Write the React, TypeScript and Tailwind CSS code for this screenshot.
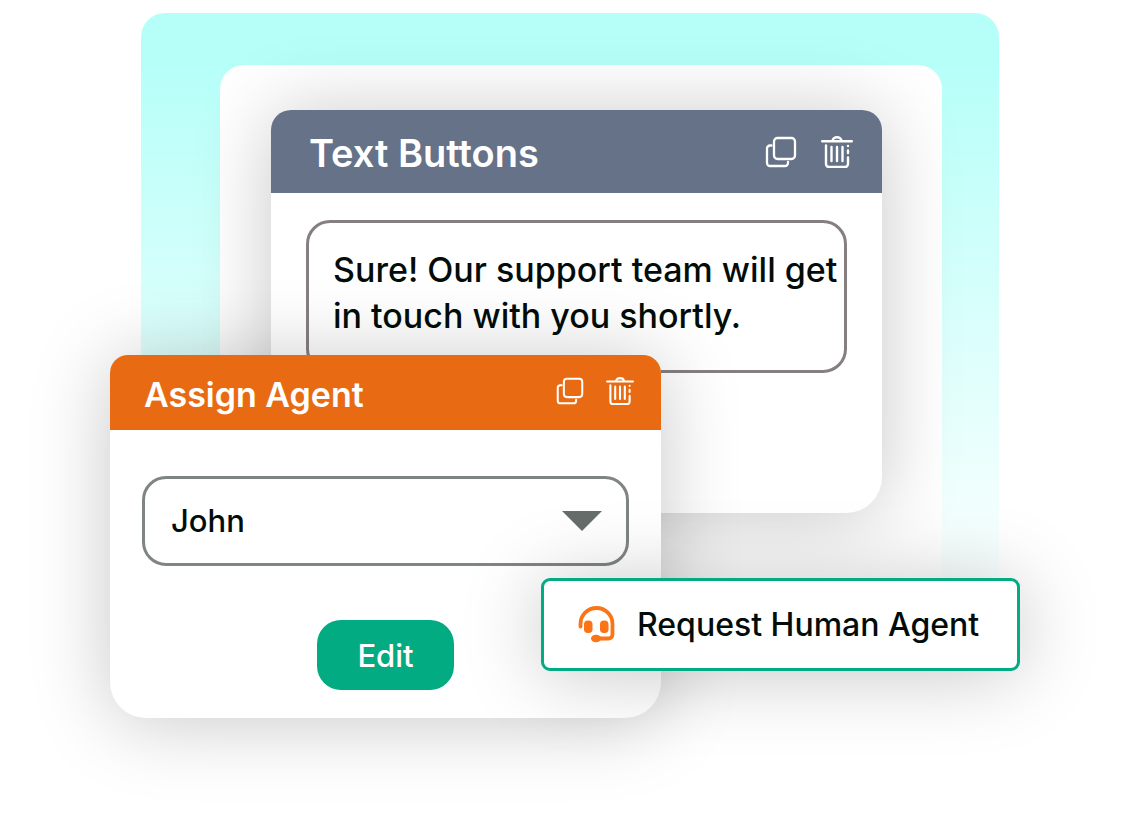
import { useState } from 'react';
import clsx from 'clsx';

interface IconProps {
  className?: string;
}

function CopyIcon({ className }: IconProps) {
  return (
    <svg viewBox="0 0 32 32" fill="none" stroke="currentColor" strokeWidth="2.3" strokeLinecap="round" className={className} aria-hidden="true">
      <rect x="9" y="2" width="21" height="21" rx="3.5" />
      <path d="M6.500 9.500H5a3 3 0 0 0-3 3V27a3 3 0 0 0 3 3h15a3 3 0 0 0 3-3v-1" />
    </svg>
  );
}

function TrashIcon({ className }: IconProps) {
  return (
    <svg viewBox="0 0 32 32" fill="none" stroke="currentColor" strokeWidth="2.4" strokeLinecap="round" className={className} aria-hidden="true">
      <path d="M1.200 5.200h29.600M11.500 5c0-5 9-5 9 0" />
      <path d="M5 9.500V28a3 3 0 0 0 3 3h16a3 3 0 0 0 3-3v-6.500M27 14.500v2.500M27 10v.1" />
      <path d="M10.500 11v14M16 11v14M21.500 11v14" />
    </svg>
  );
}

function HeadsetIcon({ className }: IconProps) {
  return (
    <svg viewBox="0 0 37 37" fill="none" className={className} aria-hidden="true">
      <path
        d="M2.500 20.500V18a16 16 0 0 1 32 0v10.500a4 4 0 0 1-4 4H18"
        stroke="currentColor"
        strokeWidth="3.800"
        strokeLinecap="round"
      />
      <rect x="6" y="14.500" width="8.500" height="12.500" rx="3.800" fill="currentColor" />
      <rect x="22" y="14.500" width="8.500" height="12.500" rx="3.800" fill="currentColor" />
      <ellipse cx="18" cy="32.500" rx="5" ry="3.800" fill="currentColor" />
    </svg>
  );
}

interface CardActionsProps {
  label: string;
  small?: boolean;
}

function CardActions({ label, small = false }: CardActionsProps) {
  const size = small ? 'size-7' : 'size-8';

  return (
    <div className={clsx('flex text-white', small ? 'gap-[22px]' : 'gap-6')}>
      <button type="button" aria-label={`Copy ${label}`}>
        <CopyIcon className={size} />
      </button>
      <button type="button" aria-label={`Delete ${label}`}>
        <TrashIcon className={size} />
      </button>
    </div>
  );
}

function TextButtonsCard() {
  return (
    <section className="h-[403px] rounded-t-[20px] rounded-b-[36px] bg-white shadow-[0_4px_80px_rgba(0,0,0,0.22)]">
      <header className="flex h-[83px] items-center justify-between rounded-t-[20px] bg-[#657287] pr-[29px] pl-[38px]">
        <h2 className="pt-1 text-[38px] font-semibold text-white">Text Buttons</h2>
        <CardActions label="text buttons" />
      </header>
      <div className="pt-[27px] pr-[35px] pl-[35px]">
        <textarea
          aria-label="Message"
          wrap="off"
          defaultValue={'Sure! Our support team will get\nin touch with you shortly.'}
          className="block h-[153px] w-full resize-none overflow-hidden rounded-[24px] border-3 border-[#857f80] pt-6 pl-6 text-[34px] leading-[46px] font-medium text-[#020d0a]"
        />
      </div>
    </section>
  );
}

function AssignAgentCard() {
  const [agent, setAgent] = useState('John');

  return (
    <section className="h-[363px] rounded-t-[18px] rounded-b-[36px] bg-white shadow-[0_4px_80px_rgba(0,0,0,0.22)]">
      <header className="flex h-[75px] items-center justify-between rounded-t-[18px] bg-[#e86b13] pr-[27px] pb-1 pl-[34px]">
        <h2 className="pt-2 text-[34px] font-semibold text-white">Assign Agent</h2>
        <CardActions label="assign agent" small />
      </header>
      <div className="flex flex-col items-center px-8 pt-[46px]">
        <div className="relative w-full">
          <select
            aria-label="Agent"
            value={agent}
            onChange={(e) => setAgent(e.target.value)}
            className="h-[90px] w-full appearance-none rounded-[24px] border-3 border-[#7f8583] pl-[26px] text-[31px] font-medium text-[#020d0a]"
          >
            <option>John</option>
          </select>
          <svg viewBox="0 0 40 20" className="pointer-events-none absolute top-[35px] right-[27px] h-5 w-10 fill-[#676d6b]" aria-hidden="true">
            <path d="M0 0h40L20 20Z" />
          </svg>
        </div>
        <button type="button" className="mt-[54px] h-[70px] w-[137px] rounded-[24px] bg-[#02ab82] pt-0.5 text-[31px] font-medium text-white">
          Edit
        </button>
      </div>
    </section>
  );
}

export default function App() {
  return (
    <main className="min-h-screen overflow-hidden bg-white pt-[13px] pr-[108px] pl-[110px] font-[Inter,sans-serif]">
      <div className="relative pr-[21px] pl-[31px]">
        {/* Backdrop fades out towards the bottom */}
        <div className="h-[640px] rounded-t-[24px] bg-linear-to-b from-[#b6fff9] from-8% to-white to-95% pt-[52px] pr-[57px] pl-[79px]">
          <div className="h-[588px] rounded-t-[24px] bg-white pt-[45px] pr-[60px] pl-[51px]">
            <TextButtonsCard />
          </div>
        </div>

        <div className="absolute top-[342px] left-0 w-[551px]">
          <AssignAgentCard />
        </div>

        <button
          type="button"
          className="absolute top-[565px] right-0 flex h-[93px] w-[479px] items-center gap-[22px] rounded-[9px] border-3 border-[#02ab82] bg-white pl-[34px] text-[32px] font-medium text-[#020d0a] shadow-[0_4px_80px_rgba(0,0,0,0.22)]"
        >
          <HeadsetIcon className="size-[37px] text-[#fb7516]" />
          Request Human Agent
        </button>
      </div>
    </main>
  );
}
